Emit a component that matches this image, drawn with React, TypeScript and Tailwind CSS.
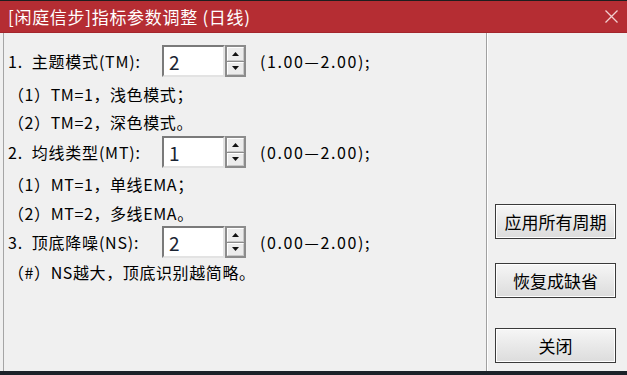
import React from 'react';

const cjk = { fontFamily: '"Noto Sans CJK SC", "Noto Sans", sans-serif' };

const SpinBox = ({ value }: { value: string }) => (
  <div className="flex h-[32px]">
    <div className="w-[63px] h-full bg-white border-2 border-t-[#7a7a7a] border-l-[#7a7a7a] border-r-[#e3e3e3] border-b-[#e3e3e3] flex items-center pl-[5px]">
      <span className="text-[19px] leading-none text-[#1a2433] tracking-normal" style={cjk}>
        {value}
      </span>
    </div>
    <div className="w-[21px] h-full flex flex-col border-2 border-[#8c8c8c] bg-[#8c8c8c] gap-[1px]">
      <div className="flex-1 bg-[#ececec] border border-t-white border-l-white border-r-[#c8c8c8] border-b-[#c8c8c8] flex items-center justify-center">
        <svg width="7" height="4" viewBox="0 0 7 4">
          <path d="M3.5 0 L7 4 L0 4 Z" fill="#111" />
        </svg>
      </div>
      <div className="flex-1 bg-[#ececec] border border-t-white border-l-white border-r-[#c8c8c8] border-b-[#c8c8c8] flex items-center justify-center">
        <svg width="7" height="4" viewBox="0 0 7 4">
          <path d="M0 0 L7 0 L3.5 4 Z" fill="#111" />
        </svg>
      </div>
    </div>
  </div>
);

const ParamRow = ({ label, value, range }: { label: string; value: string; range: string }) => (
  <div className="flex items-center h-[32px]">
    <span className="w-[154px] whitespace-pre tracking-[0.8px]">{label}</span>
    <SpinBox value={value} />
    <span className="ml-[14px] tracking-[1.6px]">{range}</span>
  </div>
);

const Line = ({ children, className }: { children: React.ReactNode; className: string }) => (
  <div className={'h-[20px] flex items-center whitespace-pre tracking-[0.6px] ' + className}>{children}</div>
);

const DlgButton = ({ children, className }: { children: React.ReactNode; className?: string }) => (
  <button
    className={
      'w-[121px] h-[35px] border border-[#3a3a3a] bg-gradient-to-b from-[#f6f6f6] to-[#dcdcdc] shadow-[inset_0_0_0_1px_#ffffff] text-[17px] text-black flex items-center justify-center ' +
      (className ?? '')
    }
    style={cjk}
  >
    {children}
  </button>
);

export default function App() {
  return (
    <div className="w-[627px] h-[375px] bg-[#1c2229] flex flex-col overflow-hidden" style={cjk}>
      <div className="h-[1px] bg-[#1e1e1e]" />
      <div className="h-[32px] bg-[#b52d33] border-b border-[#a3262c] flex items-center justify-between pl-[8px] pr-[9px]">
        <span className="text-white text-[17px] leading-none tracking-[0.7px]">[闲庭信步]指标参数调整 (日线)</span>
        <svg width="13" height="13" viewBox="0 0 13 13">
          <path d="M0.5 0.5 L12.5 12.5 M12.5 0.5 L0.5 12.5" stroke="#f2cfcf" strokeWidth="1.3" />
        </svg>
      </div>
      <div className="h-[338px] bg-[#f0f0f0] flex pl-[3px] pr-[2px]">
        <div className="w-[483px] border-l border-[#a5a5a5] text-[16px] text-black pl-[4px] pt-[12px] flex flex-col">
          <ParamRow label="1.  主题模式(TM): " value="2" range="(1.00—2.00);" />
          <Line className="mt-[7px]">（1）TM=1，浅色模式；</Line>
          <Line className="mt-[8px]">（2）TM=2，深色模式。</Line>
          <div className="mt-[4px]">
            <ParamRow label="2.  均线类型(MT): " value="1" range="(0.00—2.00);" />
          </div>
          <Line className="mt-[6px]">（1）MT=1，单线EMA；</Line>
          <Line className="mt-[9px]">（2）MT=2，多线EMA。</Line>
          <div className="mt-[3px]">
            <ParamRow label="3.  顶底降噪(NS): " value="2" range="(0.00—2.00);" />
          </div>
          <Line className="mt-[4px]">（#）NS越大，顶底识别越简略。</Line>
        </div>
        <div className="w-[1px] bg-[#a0a0a0]" />
        <div className="w-[1px] bg-white" />
        <div className="flex-1 flex flex-col pl-[7px] pt-[171px]">
          <DlgButton>应用所有周期</DlgButton>
          <DlgButton className="mt-[24px]">恢复成缺省</DlgButton>
          <DlgButton className="mt-[30px]">关闭</DlgButton>
        </div>
      </div>
    </div>
  );
}
